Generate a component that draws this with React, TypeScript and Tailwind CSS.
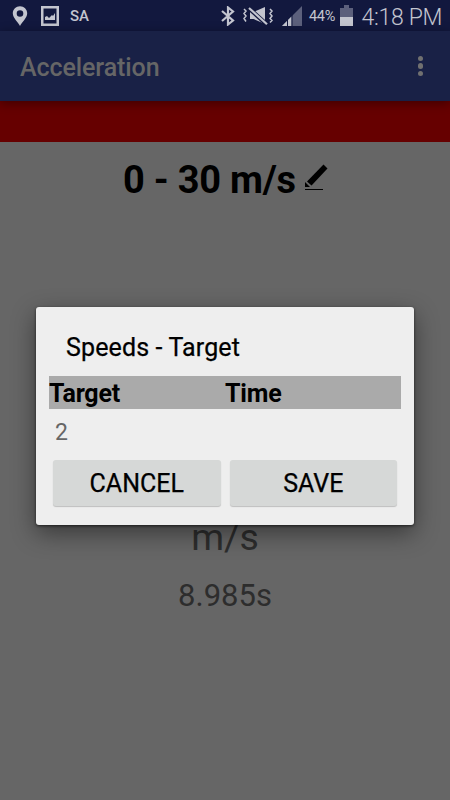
import React from "react";

function StatusBar() {
  return (
    <header className="flex h-[31px] shrink-0 items-start bg-[#12183e] text-[#c3c5cf]">
      <svg className="ml-[12px] mt-[6px] h-[21px] w-[16px]" viewBox="0 0 16 21" fill="currentColor">
        <path fillRule="evenodd" d="M8 .2C4 .2.8 3.4.8 7.3c0 4.8 5.3 8.7 7.2 12.8 1.9-4.1 7.2-8 7.2-12.8C15.2 3.400 12 .2 8 .2Zm0 4a3.300 3.300 0 1 1 0 6.600 3.300 3.300 0 0 1 0-6.600Z" />
      </svg>
      <svg className="ml-[13px] mt-[6px] h-[20px] w-[18px]" viewBox="0 0 18 20" fill="currentColor">
        <path fillRule="evenodd" d="M0 0h18v20H0Zm2.500 2.500v15h13v-15Z" />
        <path d="M4 14v-3l2-1 2 2 3-3 1 1 2-3v7Z" />
      </svg>
      <span className="ml-[11px] mt-[7px] w-[22px] whitespace-nowrap text-[15px] font-medium leading-[19px]">SA</span>
      <svg className="ml-[129px] mt-[6px] h-[20px] w-[14px]" viewBox="0 0 14 20" fill="none" stroke="currentColor" strokeWidth="2.200">
        <path d="m1 5 11 9.500-5 4V1.500l5 4L1 15" />
      </svg>
      <svg className="ml-[8px] mt-[6px] h-[20px] w-[30px]" viewBox="0 0 30 20">
        <path d="M7 6h3.500L22 1v17l-11.500-5H7Z" fill="currentColor" />
        <path d="m5 1.500 20 18" stroke="#12183e" strokeWidth="4.200" />
        <path d="m6 2 18 16.200" stroke="currentColor" strokeWidth="2.200" />
        <path d="m1 3 2 2-2 2.500L3 10l-2 2.500L3 15.500M27 3l2 2-2 2.500 2 2.500-2 2.500 2 2-2 2" fill="none" stroke="currentColor" strokeWidth="1.500" />
      </svg>
      <svg className="ml-[9px] mt-[6px] h-[20px] w-[20px]" viewBox="0 0 20 20">
        <path d="M0 20 20 0v20Z" fill="#5c607c" />
        <path d="M0 20 9.500 10.500V20Z" fill="currentColor" />
        <path d="M5.500 14v6M10 9v11" stroke="#12183e" strokeWidth="1" />
      </svg>
      <span className="ml-[7px] mt-[7px] w-[29px] whitespace-nowrap text-[14.500px] leading-[19px] tracking-[-0.300px]">44%</span>
      <svg className="ml-[2px] mt-[5px] h-[21px] w-[13px]" viewBox="0 0 13 21">
        <path d="M0 3h4V0h5v3h4v9H0Z" fill="#5c607c" />
        <path d="M0 12h13v9H0Z" fill="currentColor" />
      </svg>
      <span className="ml-[8.500px] mt-[4px] whitespace-nowrap text-[23px] font-light leading-[28px] tracking-[-0.300px]">4:18 PM</span>
    </header>
  );
}

function Toolbar() {
  return (
    <div className="relative z-10 flex h-[70px] shrink-0 items-center justify-between bg-[#192146] pl-[20px] pr-[27px] shadow-[0_2px_10px_rgba(0,0,0,0.400)]">
      <h1 className="mt-[3px] whitespace-nowrap text-[25px] font-medium leading-[30px] tracking-[-0.080px] text-[#666]">Acceleration</h1>
      <div className="flex flex-col gap-[2px]">
        <i className="size-[5.500px] rounded-full bg-[#707070]" />
        <i className="size-[5.500px] rounded-full bg-[#707070]" />
        <i className="size-[5.500px] rounded-full bg-[#707070]" />
      </div>
    </div>
  );
}

function SpeedsDialog() {
  return (
    <section className="absolute left-[36px] top-[307px] flex h-[218px] w-[378px] flex-col rounded-[3px] bg-[#eee] pl-[13px] pr-[12px] text-black shadow-[0_8px_24px_rgba(0,0,0,0.450),0_1px_3px_rgba(0,0,0,0.600)]">
      <h2 className="ml-[17px] mt-[26px] whitespace-nowrap text-[25px] leading-[30px] tracking-[0.130px] [-webkit-text-stroke:0.250px_#000]">Speeds - Target</h2>
      <div className="mt-[13px] grid h-[33px] w-[352px] grid-cols-2 bg-[#aaa] text-[25px] font-bold leading-[35px] tracking-[-0.200px]">
        <span>Target</span>
        <span>Time</span>
      </div>
      <div className="ml-[6px] mt-[10px] h-[28px] text-[23px] leading-[28px] text-[#666]">2</div>
      <div className="ml-[4px] mt-[13px] flex gap-[9px] text-[25px] leading-[48px] [-webkit-text-stroke:0.250px_#000]">
        <button className="h-[46px] w-[167.500px] rounded-[3px] bg-[#d6d8d7] shadow-[0_1px_1px_rgba(0,0,0,0.200)]">CANCEL</button>
        <button className="h-[46px] w-[167.500px] rounded-[3px] bg-[#d6d8d7] shadow-[0_1px_1px_rgba(0,0,0,0.200)]">SAVE</button>
      </div>
    </section>
  );
}

export default function App() {
  return (
    <div className="relative flex h-[800px] w-[450px] flex-col overflow-hidden bg-[#666] font-['Roboto',sans-serif]">
      <StatusBar />
      <Toolbar />
      <div className="h-[41px] shrink-0 bg-[#660000]" />
      <main className="flex flex-col">
        <div className="ml-[123px] mt-[15px] flex h-[46px] items-start text-black">
          <span className="w-[174px] whitespace-nowrap text-[38px] font-bold leading-[46px] tracking-[-0.250px]">0 - 30 m/s</span>
          <svg className="ml-[7px] mt-[7px] h-[27px] w-[24px]" viewBox="0 0 24 27">
            <path d="M3 17.500 19.500.5 23.500 4.500 7.500 21.500Z" />
            <path d="M1 18v5h5Z" />
            <path d="M1 25.500h18" stroke="#000" />
          </svg>
        </div>
        <div className="mt-[311px] h-[46px] text-center text-[37.500px] leading-[46px] text-[#2d2d2d]">m/s</div>
        <div className="mt-[16px] h-[40px] text-center text-[31px] leading-[40px] text-[#2d2d2d]">8.985s</div>
      </main>
      <SpeedsDialog />
    </div>
  );
}
